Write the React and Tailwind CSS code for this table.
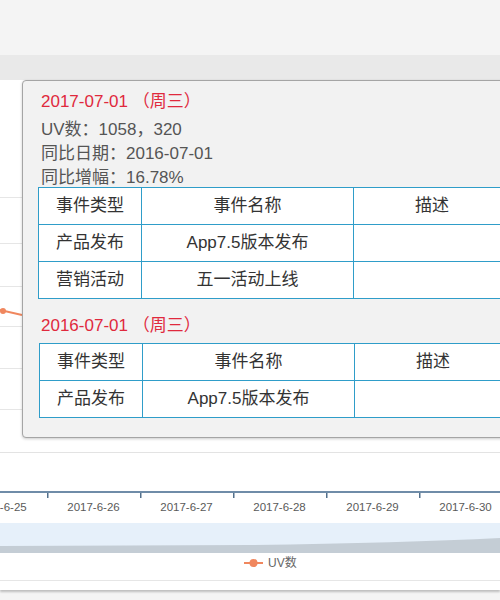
import React from 'react';

const font = { fontFamily: '"Liberation Sans", "Noto Sans CJK SC", sans-serif' };

const events2017 = [
    { type: '产品发布', name: 'App7.5版本发布', desc: '' },
    { type: '营销活动', name: '五一活动上线', desc: '' }
];

const events2016 = [
    { type: '产品发布', name: 'App7.5版本发布', desc: '' }
];

const dates = ['2017-6-25', '2017-6-26', '2017-6-27', '2017-6-28', '2017-6-29', '2017-6-30'];
const gridLines = [117, 163, 206, 246, 288, 329];
const ticks = [47, 140, 233, 326, 419];

const EventTable = ({ rows, className }) => (
    <div className={`w-[473px] border-t border-l border-[#2f9dc9] bg-white text-[17px] text-[#333] ${className}`}>
        <div className="flex h-[37px] border-b border-[#2f9dc9]">
            <div className="w-[103px] flex items-center justify-center border-r border-[#2f9dc9]">事件类型</div>
            <div className="w-[212px] flex items-center justify-center border-r border-[#2f9dc9]">事件名称</div>
            <div className="flex-1 flex items-center justify-center border-r border-[#2f9dc9]">描述</div>
        </div>
        {rows.map((row, i) => (
            <div key={i} className="flex h-[37px] border-b border-[#2f9dc9]">
                <div className="w-[103px] flex items-center justify-center border-r border-[#2f9dc9]">{row.type}</div>
                <div className="w-[212px] flex items-center justify-center border-r border-[#2f9dc9]">{row.name}</div>
                <div className="flex-1 flex items-center justify-center border-r border-[#2f9dc9]">{row.desc}</div>
            </div>
        ))}
    </div>
);

const Tooltip = () => (
    <div className="absolute left-[22px] top-[80px] w-[505px] h-[358px] bg-[#f2f2f2] border border-[#a5a5a5] rounded-[4px] shadow-[0_1px_3px_rgba(0,0,0,0.2)]">
        <div className="pt-[9px] pl-[18px] text-[17px] leading-[24px] text-[#555]">
            <div className="text-[#e0293d]">2017-07-01 （周三）</div>
            <div className="mt-[4px]">UV数：1058，320</div>
            <div>同比日期：2016-07-01</div>
            <div>同比增幅：16.78%</div>
        </div>
        <EventTable rows={events2017} className="relative ml-[15px] mt-[-3px]" />
        <div className="pl-[18px] mt-[15px] text-[17px] leading-[24px] text-[#e0293d]">2016-07-01 （周三）</div>
        <EventTable rows={events2016} className="ml-[16px] mt-[5px]" />
    </div>
);

export default function App() {
    return (
        <div style={font} className="relative w-[500px] h-[600px] overflow-hidden bg-[#f4f4f4]">
            <div className="h-[55px]" />
            <div className="bg-white shadow-[0_2px_2px_rgba(0,0,0,0.22)]">
                <div className="h-[25px] bg-[#e9e9e9]" />

                {/* plot area */}
                <svg width="500" height="372" className="block">
                    {gridLines.map((y) => (
                        <line key={y} x1="0" x2="500" y1={y + 0.5} y2={y + 0.5} stroke="#e6e6e6" strokeWidth="1" />
                    ))}
                    <polyline points="0,230 22,235" fill="none" stroke="#f0875e" strokeWidth="2" />
                    <circle cx="3" cy="231" r="3" fill="#f0875e" />
                </svg>

                {/* x axis */}
                <div className="border-t border-[#e3e3e3]">
                    <svg width="500" height="46" className="block">
                        <rect x="0" y="38" width="500" height="2" fill="#6f8ca8" />
                        {ticks.map((x) => (
                            <rect key={x} x={x} y="40" width="1.5" height="5" fill="#53708c" />
                        ))}
                    </svg>
                    <div className="flex ml-[-46px] h-[16px] text-[11.5px] leading-[16px] text-[#5a5a5a]">
                        {dates.map((d) => (
                            <div key={d} className="w-[93px] shrink-0 text-center">{d}</div>
                        ))}
                    </div>
                </div>

                {/* data zoom slider */}
                <svg width="500" height="30" className="block mt-[8px]">
                    <rect x="0" y="0" width="500" height="30" fill="#e6f0fa" />
                    <path d="M0,23 L250,22 Q400,20 500,15 L500,30 L0,30 Z" fill="#c4cdd5" />
                </svg>

                {/* legend */}
                <div className="flex items-center h-[20px] pl-[244px] text-[12px] text-[#666] border-b border-[#e6e6e6] box-content pb-[7px]">
                    <svg width="19" height="10" className="mr-[5px]">
                        <line x1="0" x2="19" y1="5" y2="5" stroke="#f0875e" strokeWidth="2" />
                        <circle cx="9.5" cy="5" r="4" fill="#f0875e" />
                    </svg>
                    <span>UV数</span>
                </div>
                <div className="h-[9px]" />
            </div>

            <Tooltip />
        </div>
    );
}
